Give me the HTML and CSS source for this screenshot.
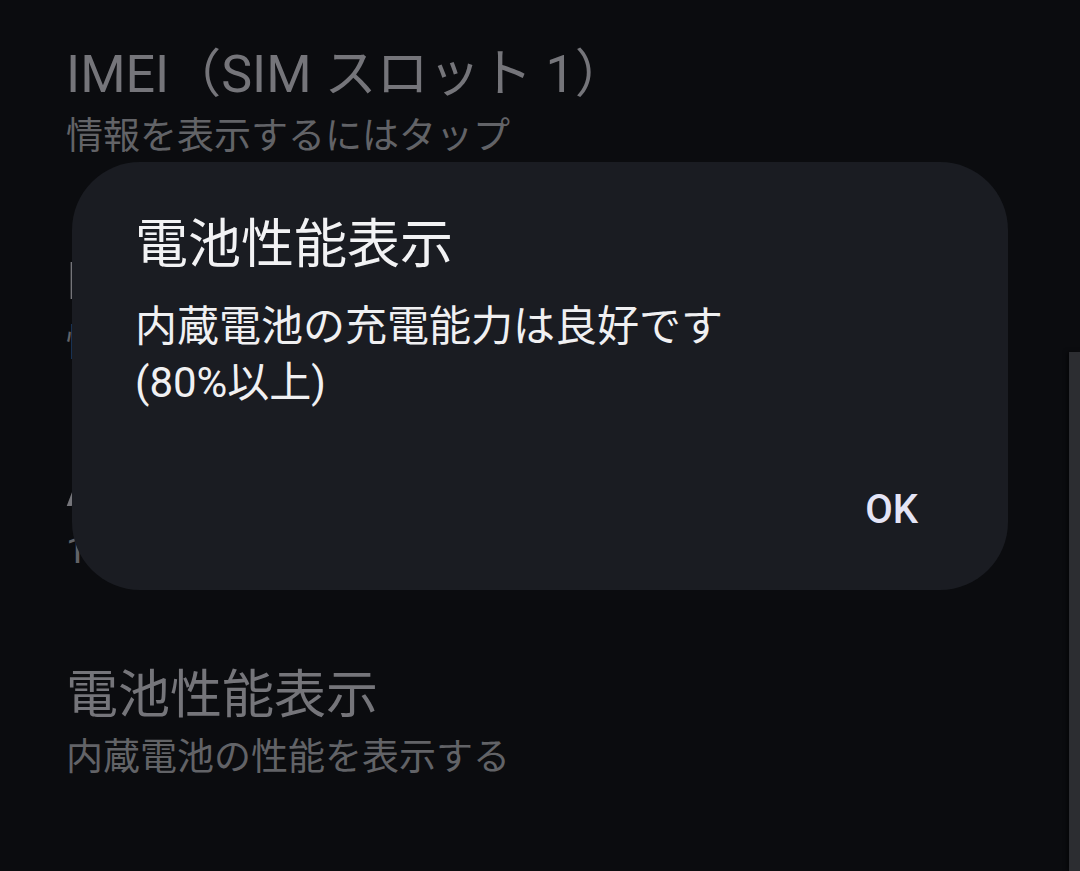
FILE: index.html
```html
<!DOCTYPE html>
<html lang="ja">
  <head>
    <meta charset="UTF-8" />
    <title>電池性能表示</title>
    <link rel="stylesheet" href="styles.css">
  </head>

  <body>
    <div class="screen">
      <ul class="list">
        <li class="item">
          <div class="title">IMEI（SIM スロット 1）</div>
          <div class="summary">情報を表示するにはタップ</div>
        </li>
        <li class="item">
          <div class="title">IMEI（SIM スロット 2）</div>
          <div class="summary">情報を表示するにはタップ</div>
        </li>
        <li class="item">
          <div class="title">Android バージョン</div>
          <div class="summary">14</div>
        </li>
        <li class="item">
          <div class="title">電池性能表示</div>
          <div class="summary">内蔵電池の性能を表示する</div>
        </li>
      </ul>
      <div class="edge"></div>

      <div class="dialog">
        <h2 class="dialog-title">電池性能表示</h2>
        <p class="dialog-text">内蔵電池の充電能力は良好です<br>(80%以上)</p>
        <div class="dialog-actions">
          <button class="dialog-button">OK</button>
        </div>
      </div>
    </div>
  </body>
</html>
```

FILE: styles.css
```css
body {
  margin: 0;
  padding: 0;
  background-color: #0b0c0f;
  font-family: Roboto, "Noto Sans CJK JP", sans-serif;
}

.screen {
  position: relative;
  display: flex;
  width: 1080px;
  height: 871px;
  overflow: hidden;
}

.list {
  flex: 1;
  list-style: none;
  margin: 0;
  padding: 44px 0 0 66px;
}

.item {
  height: 207px;
}

.item .title {
  font-size: 52px;
  line-height: 62px;
  color: #75757a;
  white-space: nowrap;
}

.item .summary {
  margin-top: 8px;
  font-size: 37px;
  line-height: 46px;
  color: #626367;
  white-space: nowrap;
}

.edge {
  width: 11px;
  margin-top: 352px;
  background-color: #2c2d31;
  box-shadow: -2px 0 4px rgba(0, 0, 0, 0.5);
}

.dialog {
  position: absolute;
  left: 72px;
  top: 162px;
  width: 936px;
  height: 428px;
  box-sizing: border-box;
  padding: 50px 90px 0 63px;
  border-radius: 68px;
  background-color: #1a1c22;
  display: flex;
  flex-direction: column;
}

.dialog-title {
  margin: 0;
  font-size: 53px;
  line-height: 66px;
  font-weight: 400;
  color: #f2f2f4;
}

.dialog-text {
  margin: 21px 0 0;
  font-size: 42px;
  line-height: 56px;
  color: #f0f0f2;
}

.dialog-actions {
  margin-top: auto;
  margin-bottom: 56px;
  display: flex;
  justify-content: flex-end;
}

.dialog-button {
  padding: 0;
  border: none;
  background: none;
  font-family: Roboto, sans-serif;
  font-size: 40px;
  font-weight: 500;
  line-height: 48px;
  color: #e4e4f6;
}
```
